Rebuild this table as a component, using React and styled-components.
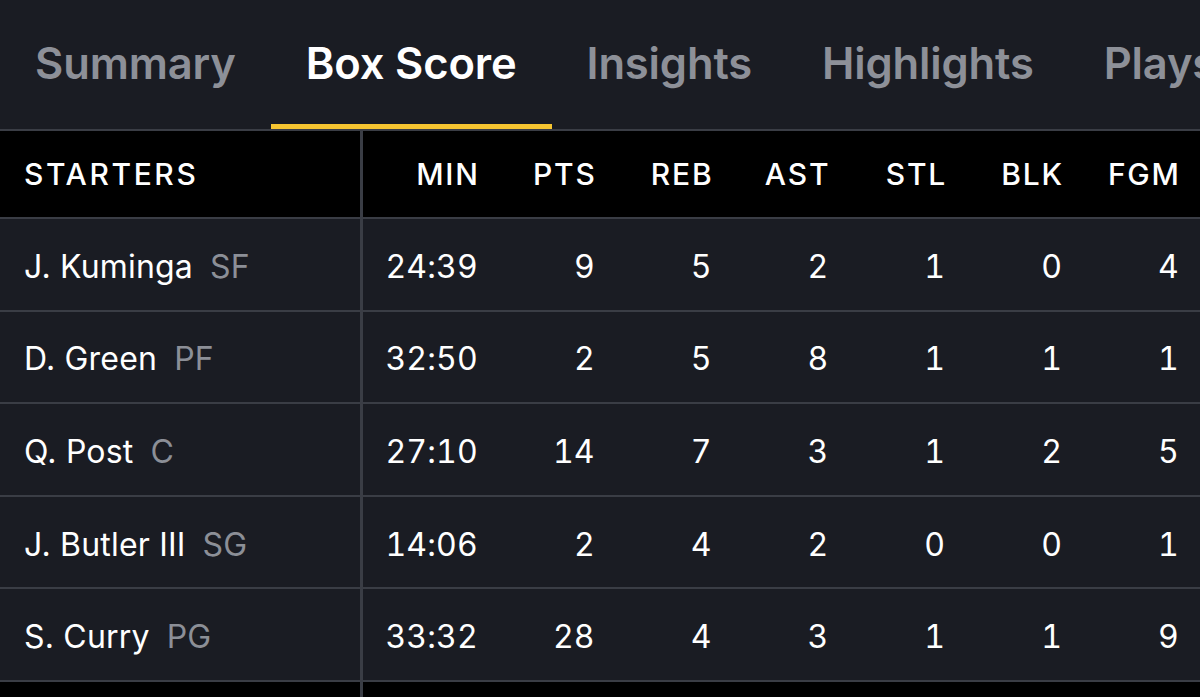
import React from "react";
import styled, { createGlobalStyle } from "styled-components";

const Global = createGlobalStyle`
  html, body { margin: 0; padding: 0; background: #1a1c23; }
  body { font-family: Inter, "Noto Sans", sans-serif; -webkit-font-smoothing: antialiased; }
  #root { height: 697px; overflow: hidden; }
`;

const Page = styled.div`
  width: 1200px;
  height: 697px;
  overflow: hidden;
  background: #1a1c23;
  color: #fff;
`;

const TabBar = styled.nav`
  display: flex;
  height: 129px;
  border-bottom: 2px solid #3a3d45;
  box-sizing: content-box;
  white-space: nowrap;
  overflow: hidden;
`;

const Tab = styled.div`
  position: relative;
  display: flex;
  align-items: center;
  padding: 0 35px 3px;
  font-size: 43.5px;
  font-weight: 600;
  letter-spacing: -0.15px;
  color: ${(p) => (p.$active ? "#ffffff" : "#8d9098")};
  flex-shrink: 0;
  &::after {
    content: "";
    display: ${(p) => (p.$active ? "block" : "none")};
    position: absolute;
    left: 0;
    right: 0;
    bottom: 0;
    height: 5px;
    background: #f6c531;
  }
`;

const Table = styled.div`
  display: flex;
  flex-direction: column;
`;

const Row = styled.div`
  display: grid;
  grid-template-columns: 363px 115px repeat(6, 116.83px) 1fr;
  height: ${(p) => (p.$head ? "88px" : "92.6px")};
  box-sizing: border-box;
  border-bottom: 2.5px solid #3a3d45;
  background: ${(p) => (p.$head ? "#000" : "#1a1c23")};
`;

const NameCell = styled.div`
  display: flex;
  align-items: center;
  gap: 17px;
  padding: ${(p) => (p.$head ? "0" : "4px")} 0 0 24px;
  border-right: 3px solid #3a3d45;
  font-size: ${(p) => (p.$head ? "30px" : "32px")};
  font-weight: ${(p) => (p.$head ? 500 : 400)};
  letter-spacing: ${(p) => (p.$head ? "2.6px" : "0.2px")};
  color: #fff;
`;

const Pos = styled.span`
  color: #8c8f97;
`;

const StatCell = styled.div`
  display: flex;
  align-items: center;
  justify-content: flex-end;
  padding-top: ${(p) => (p.$head ? "0" : "4px")};
  font-size: ${(p) => (p.$head ? "30px" : "32px")};
  font-weight: ${(p) => (p.$head ? 500 : 400)};
  letter-spacing: ${(p) => (p.$head ? "1.8px" : "0.2px")};
  margin-right: ${(p) => (p.$head ? "-1.8px" : "0")};
  font-variant-numeric: tabular-nums;
  color: #fff;
`;

const Filler = styled.div``;

const Bench = styled.div`
  display: grid;
  grid-template-columns: 363px 1fr;
  height: 120px;
  background: #000;
`;

const BenchName = styled.div`
  border-right: 3px solid #3a3d45;
`;

const tabs = ["Summary", "Box Score", "Insights", "Highlights", "Plays"];
const cols = ["MIN", "PTS", "REB", "AST", "STL", "BLK", "FGM"];
const players = [
  { name: "J. Kuminga", pos: "SF", stats: ["24:39", 9, 5, 2, 1, 0, 4] },
  { name: "D. Green", pos: "PF", stats: ["32:50", 2, 5, 8, 1, 1, 1] },
  { name: "Q. Post", pos: "C", stats: ["27:10", 14, 7, 3, 1, 2, 5] },
  { name: "J. Butler III", pos: "SG", stats: ["14:06", 2, 4, 2, 0, 0, 1] },
  { name: "S. Curry", pos: "PG", stats: ["33:32", 28, 4, 3, 1, 1, 9] },
];

export default function App() {
  return (
    <Page>
      <Global />
      <TabBar>
        {tabs.map((t) => (
          <Tab key={t} $active={t === "Box Score"}>
            {t}
          </Tab>
        ))}
      </TabBar>
      <Table>
        <Row $head>
          <NameCell $head>STARTERS</NameCell>
          {cols.map((c) => (
            <StatCell $head key={c}>
              {c}
            </StatCell>
          ))}
          <Filler />
        </Row>
        {players.map((p) => (
          <Row key={p.name}>
            <NameCell>
              {p.name}
              <Pos>{p.pos}</Pos>
            </NameCell>
            {p.stats.map((s, i) => (
              <StatCell key={i}>{s}</StatCell>
            ))}
            <Filler />
          </Row>
        ))}
        <Bench>
          <BenchName />
        </Bench>
      </Table>
    </Page>
  );
}
